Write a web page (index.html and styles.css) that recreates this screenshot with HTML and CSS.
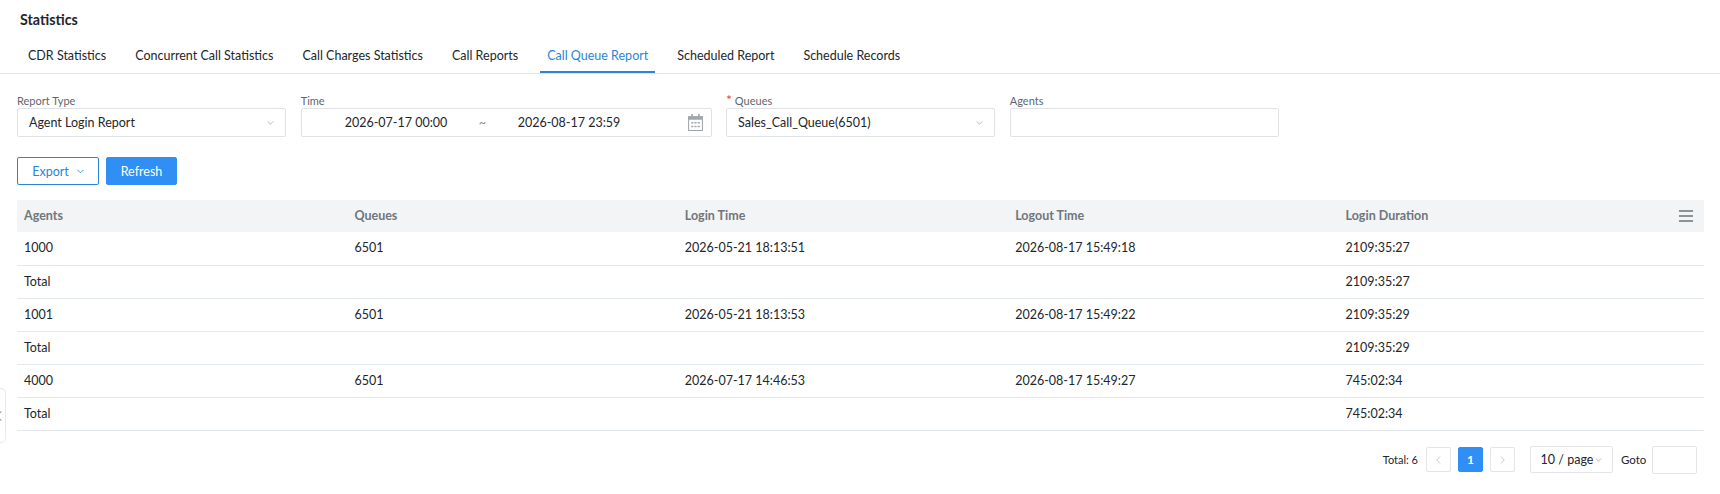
FILE: index.html
```html
<!DOCTYPE html>
<html lang="en">
<head>
<meta charset="utf-8">
<title>Statistics</title>
<link rel="stylesheet" href="styles.css">
</head>
<body>
<h1 class="title">Statistics</h1>
<nav class="tabs">
  <a class="tab">CDR Statistics</a>
  <a class="tab">Concurrent Call Statistics</a>
  <a class="tab">Call Charges Statistics</a>
  <a class="tab">Call Reports</a>
  <a class="tab active">Call Queue Report</a>
  <a class="tab">Scheduled Report</a>
  <a class="tab">Schedule Records</a>
</nav>
<main class="content">
  <form class="filters">
    <div class="field w270">
      <label class="label">Report Type</label>
      <div class="input select"><span>Agent Login Report</span>
        <svg class="chev" viewBox="0 0 8 5" width="7" height="4"><path d="M.5.5 4 4 7.500.5" fill="none" stroke="#a3a8ae"/></svg></div>
    </div>
    <div class="field w411">
      <label class="label">Time</label>
      <div class="input range">
        <span class="from">2026-07-17 00:00</span><span class="tilde">~</span><span class="to">2026-08-17 23:59</span>
        <svg class="cal" viewBox="0 0 14 16" width="15" height="17"><path d="M.5 2.500h13v13H.5z" fill="none" stroke="#a0a6ad"/><path d="M0 2h14v3.500H0zM3 0h1.500v3H3zM9.500 0H11v3H9.500z" fill="#a0a6ad"/><path d="M3 7.500h2v1.500H3zM6 7.500h2v1.500H6zM9 7.500h2v1.500H9zM3 11h2v1.500H3zM6 11h2v1.500H6zM9 11h2v1.500H9z" fill="#a0a6ad"/></svg>
      </div>
    </div>
    <div class="field w270">
      <label class="label"><span class="req">*</span> Queues</label>
      <div class="input select"><span>Sales_Call_Queue(6501)</span>
        <svg class="chev" viewBox="0 0 8 5" width="7" height="4"><path d="M.5.5 4 4 7.500.5" fill="none" stroke="#a3a8ae"/></svg></div>
    </div>
    <div class="field w270">
      <label class="label">Agents</label>
      <div class="input"></div>
    </div>
  </form>
  <div class="actions">
    <button class="btn outline" type="button">Export
      <svg viewBox="0 0 8 5" width="7" height="5"><path d="M.5.5 4 4 7.500.5" fill="none" stroke="#2a8af0"/></svg></button>
    <button class="btn primary" type="button">Refresh</button>
  </div>
  <table class="grid">
    <colgroup><col class="col"><col class="col"><col class="col"><col class="col"><col></colgroup>
    <thead>
      <tr><th>Agents</th><th>Queues</th><th>Login Time</th><th>Logout Time</th><th class="last">Login Duration
        <svg class="menu" viewBox="0 0 14 12" width="14" height="12"><path d="M0 1h14M0 6h14M0 11h14" stroke="#8c929a" stroke-width="2"/></svg></th></tr>
    </thead>
    <tbody>
      <tr><td>1000</td><td>6501</td><td>2026-05-21 18:13:51</td><td>2026-08-17 15:49:18</td><td>2109:35:27</td></tr>
      <tr><td>Total</td><td></td><td></td><td></td><td>2109:35:27</td></tr>
      <tr><td>1001</td><td>6501</td><td>2026-05-21 18:13:53</td><td>2026-08-17 15:49:22</td><td>2109:35:29</td></tr>
      <tr><td>Total</td><td></td><td></td><td></td><td>2109:35:29</td></tr>
      <tr><td>4000</td><td>6501</td><td>2026-07-17 14:46:53</td><td>2026-08-17 15:49:27</td><td>745:02:34</td></tr>
      <tr><td>Total</td><td></td><td></td><td></td><td>745:02:34</td></tr>
    </tbody>
  </table>
  <div class="pager">
    <span class="total">Total: 6</span>
    <span class="page"><svg viewBox="0 0 5 8" width="5" height="8"><path d="M4 .5.8 4 4 7.500" fill="none" stroke="#c5c9ce"/></svg></span>
    <span class="page current">1</span>
    <span class="page"><svg viewBox="0 0 5 8" width="5" height="8"><path d="M1 .5 4.200 4 1 7.500" fill="none" stroke="#c5c9ce"/></svg></span>
    <span class="size">10 / page<svg viewBox="0 0 8 5" width="7" height="4"><path d="M.5.5 4 4 7.500.5" fill="none" stroke="#a3a8ae"/></svg></span>
    <span class="goto">Goto</span>
    <span class="goto-box"></span>
  </div>
</main>
<aside class="side-tab"><svg viewBox="0 0 6 10" width="6" height="10"><path d="M5 .5 1 5l4 4.500" fill="none" stroke="#555"/></svg></aside>
</body>
</html>
```
FILE: styles.css
```css
* { box-sizing: border-box; }
html, body { margin: 0; padding: 0; background: #fff; }
body {
  width: 1720px; height: 494px; overflow: hidden; position: relative;
  font-family: Lato, "Liberation Sans", sans-serif;
  font-size: 12.5px; color: #22262b;
}
.title { margin: 0; padding: 13px 0 0 20px; height: 39px; font-size: 14.300px; font-weight: 700; line-height: 14px; color: #22262b; }
.tabs { display: flex; height: 35px; padding-left: 21px; border-bottom: 1px solid #e3e6e9; gap: 15px; }
.tab { padding: 0 7px; height: 34px; line-height: 33px; font-size: 12.5px; white-space: nowrap; }
.tab.active { color: #2a84d8; border-bottom: 2px solid #2a84d8; }
.content { padding: 0 16px 0 17px; }
.filters { display: flex; gap: 14.400px; padding-top: 20px; }
.field { display: flex; flex-direction: column; }
.w270 { width: 269.300px; }
.w411 { width: 411px; }
.label { height: 14px; line-height: 13px; font-size: 11px; color: #5f666d; }
.req { color: #e5483f; font-size: 14px; line-height: 10px; }
.input {
  height: 29px; display: flex; align-items: center; padding: 0 11px;
  border: 1px solid #dfe2e6; border-radius: 2px; font-size: 12.5px;
}
.select { justify-content: space-between; }
.range { padding: 0 8px 0 43px; }
.from { width: 134px; flex: none; }
.tilde { width: 39px; flex: none; color: #8c939b; }
.to { flex: 1; }
.actions { display: flex; gap: 7px; margin-top: 20px; }
.btn {
  height: 28px; border-radius: 2px; font: 12.5px Lato, "Liberation Sans", sans-serif;
  padding: 0; display: flex; align-items: center; justify-content: center; gap: 8px;
}
.outline { width: 82px; background: #fff; border: 1px solid #2a84d8; color: #2a84d8; }
.primary { width: 71px; background: #2f8ff5; border: 1px solid #2f8ff5; color: #fff; }
.grid { width: 1687px; margin-top: 15px; border-collapse: collapse; table-layout: fixed; }
.col { width: 330.400px; }
.grid th {
  height: 32px; padding: 0 7px 2px; background: #f2f4f5; color: #70767c;
  text-align: left; font-weight: 700; font-size: 12.5px;
}
.grid th.last { position: relative; }
.menu { position: absolute; right: 11px; top: 10px; }
.grid td { height: 33px; padding: 0 7px 1px; border-bottom: 1px solid #e3e8ec; font-size: 12.5px; }
.pager { display: flex; align-items: center; justify-content: flex-end; margin-top: 15px; padding-right: 7px; height: 28px; }
.total { font-size: 11px; margin-right: 8px; }
.page {
  width: 25px; height: 25px; margin-right: 7px; border: 1px solid #e3e6e9; border-radius: 2px;
  display: flex; align-items: center; justify-content: center; font-size: 12px;
}
.page.current { background: #2f8ff5; border-color: #2f8ff5; color: #fff; font-weight: 700; }
.size {
  width: 83px; height: 27px; margin-left: 8px; border: 1px solid #e3e6e9; border-radius: 2px;
  display: flex; align-items: center; justify-content: center; gap: 2px; font-size: 12.5px;
}
.goto { font-size: 11.5px; margin-left: 8px; width: 31px; }
.goto-box { width: 45px; height: 28px; border: 1px solid #e3e6e9; border-radius: 2px; }
.side-tab {
  position: absolute; left: -8px; top: 388px; width: 14px; height: 55px;
  background: #fff; border: 1px solid #e6e9ec; border-radius: 5px;
  display: flex; align-items: center; justify-content: flex-end; padding-right: 3px;
}
```
